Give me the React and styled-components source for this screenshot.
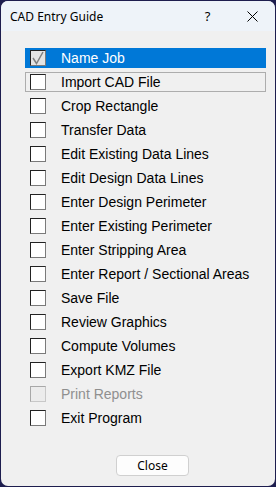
import React from "react";
import styled, { createGlobalStyle } from "styled-components";

const GlobalStyle = createGlobalStyle`
  html, body {
    margin: 0;
    padding: 0;
    background: #1d1d4e;
  }
  #root {
    padding: 1px;
  }
`;

const Window = styled.div`
  width: 274px;
  height: 485px;
  background: #f0f0f0;
  border-radius: 7px;
  overflow: hidden;
  display: flex;
  flex-direction: column;
`;

const TitleBar = styled.div`
  height: 30px;
  background: #eef3f9;
  display: flex;
  align-items: center;
  padding-left: 9px;
  font-family: "Noto Sans", "Open Sans", sans-serif;
  font-size: 12px;
  color: #000;
`;

const Title = styled.div`
  flex: 1;
  padding-top: 1px;
`;

const TitleButton = styled.div`
  width: 46px;
  height: 30px;
  display: flex;
  align-items: center;
  justify-content: center;
  font-size: 13px;
  padding-left: ${(p) => p.$shift || 0}px;
  box-sizing: border-box;
`;

const Body = styled.div`
  flex: 1;
  display: flex;
  flex-direction: column;
  padding: 17px 9px 0 24px;
`;

const List = styled.div`
  display: flex;
  flex-direction: column;
  gap: 4px;
`;

const Row = styled.div`
  height: 20px;
  display: flex;
  align-items: center;
  padding-left: 4px;
  box-sizing: border-box;
  background: ${(p) => (p.$selected ? "#0078d7" : "transparent")};
  border: 1px solid ${(p) => (p.$focused ? "#adadad" : "transparent")};
  font-family: "Liberation Sans", Arial, sans-serif;
  font-size: 14px;
  color: ${(p) => (p.$selected ? "#fff" : p.$disabled ? "#8f8f8f" : "#000")};
`;

const Box = styled.div`
  width: 16px;
  height: 16px;
  box-sizing: border-box;
  flex: none;
  border: 1px solid ${(p) => (p.$disabled ? "#a8a8a8" : "#222")};
  border-right-color: ${(p) => (p.$disabled ? "#c8c8c8" : "#7a7a7a")};
  border-bottom-color: ${(p) => (p.$disabled ? "#c8c8c8" : "#7a7a7a")};
  background: ${(p) => (p.$disabled ? "#ececec" : p.$checked ? "#e4e4e4" : "#fff")};
  display: flex;
  align-items: center;
  justify-content: center;
  margin-right: 15px;
`;

const Footer = styled.div`
  margin-top: auto;
  height: 40px;
  display: flex;
  justify-content: center;
  padding-left: 14px;
`;

const CloseButton = styled.button`
  width: 73px;
  height: 21px;
  margin-top: 9px;
  background: #fdfdfd;
  border: 1px solid #d0d0d0;
  border-radius: 4px;
  font-family: "Noto Sans", "Open Sans", sans-serif;
  font-size: 12px;
  color: #000;
  padding: 0;
`;

const items = [
  "Name Job",
  "Import CAD File",
  "Crop Rectangle",
  "Transfer Data",
  "Edit Existing Data Lines",
  "Edit Design Data Lines",
  "Enter Design Perimeter",
  "Enter Existing Perimeter",
  "Enter Stripping Area",
  "Enter Report / Sectional Areas",
  "Save File",
  "Review Graphics",
  "Compute Volumes",
  "Export KMZ File",
  "Print Reports",
  "Exit Program",
];

function Check() {
  return (
    <svg width="14" height="14" viewBox="0 0 14 14">
      <path d="M2 7 L5.5 12.5 L12 1" fill="none" stroke="#808080" strokeWidth="1.5" />
    </svg>
  );
}

export default function App() {
  return (
    <>
      <GlobalStyle />
      <Window>
        <TitleBar>
          <Title>CAD Entry Guide</Title>
          <TitleButton $shift={3}>?</TitleButton>
          <TitleButton>
            <svg width="11" height="11" viewBox="0 0 11 11">
              <path d="M0.5 0.5 L10.5 10.5 M10.5 0.5 L0.5 10.5" stroke="#000" strokeWidth="1" />
            </svg>
          </TitleButton>
        </TitleBar>
        <Body>
          <List>
            {items.map((label, i) => (
              <Row key={label} $selected={i === 0} $focused={i === 1} $disabled={label === "Print Reports"}>
                <Box $checked={i === 0} $disabled={label === "Print Reports"}>
                  {i === 0 && <Check />}
                </Box>
                {label}
              </Row>
            ))}
          </List>
          <Footer>
            <CloseButton>Close</CloseButton>
          </Footer>
        </Body>
      </Window>
    </>
  );
}
